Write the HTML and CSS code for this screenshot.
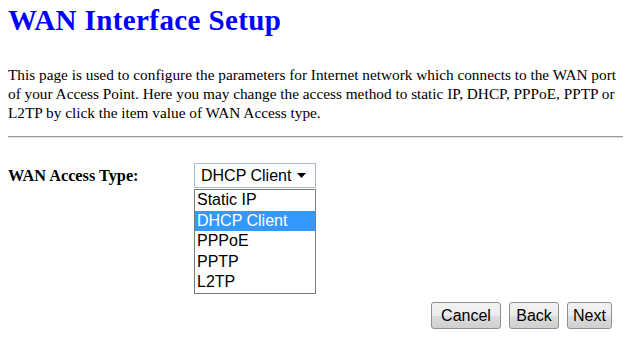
FILE: index.html
```html
<!DOCTYPE html>
<html lang="en">
<head>
  <meta charset="UTF-8" />
  <title>WAN Interface Setup</title>
  <link rel="stylesheet" href="styles.css">
</head>
<body>

  <h1 class="page-title">WAN Interface Setup</h1>

  <p class="page-info">This page is used to configure the parameters for Internet network which connects to the WAN port of your Access Point. Here you may change the access method to static IP, DHCP, PPPoE, PPTP or L2TP by click the item value of WAN Access type.</p>

  <hr class="divider">

  <div class="wan-row">
    <div class="wan-label">WAN Access Type:</div>
    <div class="wan-select">
      <div class="select-box">
        <span>DHCP Client</span>
        <i class="select-arrow"></i>
      </div>
      <!-- avattu alasvetovalikko -->
      <ul class="select-list">
        <li>Static IP</li>
        <li class="selected">DHCP Client</li>
        <li>PPPoE</li>
        <li>PPTP</li>
        <li>L2TP</li>
      </ul>
    </div>
  </div>

  <div class="wizard-buttons">
    <button class="wiz-btn btn-cancel">Cancel</button>
    <button class="wiz-btn btn-back">Back</button>
    <button class="wiz-btn btn-next">Next</button>
  </div>

</body>
</html>
```

FILE: styles.css
```css
body {
  margin: 0;
  padding: 0 8px;
  background-color: #ffffff;
  font-family: 'Liberation Serif', 'Times New Roman', serif;
  color: #000;
}

.page-title {
  margin: 4px 0 0 0;
  font-size: 29px;
  line-height: 32px;
  font-weight: bold;
  color: #0000ff;
  letter-spacing: 0.4px;
}

.page-info {
  margin: 29px 0 0 0;
  font-size: 15.3px;
  line-height: 19px;
}

.divider {
  margin: 14px 0 0 0;
  border: none;
  border-top: 1px solid #9a9a9a;
  border-bottom: 1px solid #e2e2e2;
  height: 0;
}

.wan-row {
  display: flex;
  align-items: center;
  margin-top: 25px;
  height: 25px;
}

.wan-label {
  width: 186px;
  font-size: 16.3px;
  font-weight: bold;
}

.wan-select {
  position: relative;
  width: 122px;
}

.select-box {
  box-sizing: border-box;
  height: 25px;
  border: 1px solid #a7bcd3;
  display: flex;
  align-items: center;
  justify-content: space-between;
  padding: 0 9px 0 6px;
  font-family: 'Liberation Sans', Arial, sans-serif;
  font-size: 16px;
  color: #000;
}

.select-arrow {
  display: inline-block;
  width: 9px;
  height: 5px;
  background-color: #000;
  clip-path: polygon(0 0, 100% 0, 50% 100%);
}

.select-list {
  position: absolute;
  top: 26px;
  left: 0;
  box-sizing: border-box;
  width: 122px;
  margin: 0;
  padding: 0;
  list-style: none;
  border: 1px solid #7a7a7a;
  background-color: #fff;
  font-family: 'Liberation Sans', Arial, sans-serif;
  font-size: 16px;
  z-index: 10;
}

.select-list li {
  height: 20.6px;
  line-height: 20.6px;
  padding: 0 2px;
}

.select-list li.selected {
  background-color: #3399ff;
  color: #fff;
}

.wizard-buttons {
  display: flex;
  justify-content: flex-end;
  gap: 8px;
  margin-top: 114px;
  padding-right: 11px;
}

.wiz-btn {
  height: 27px;
  padding: 0;
  font-family: 'Liberation Sans', Arial, sans-serif;
  font-size: 16px;
  color: #000;
  border: 1px solid #8e8f8f;
  border-radius: 3px;
  background: linear-gradient(to bottom, #f3f3f3 0%, #ebebeb 50%, #dddddd 51%, #cfcfcf 100%);
  cursor: pointer;
}

.btn-cancel {
  width: 70px;
}

.btn-back {
  width: 50px;
}

.btn-next {
  width: 45px;
}
```
